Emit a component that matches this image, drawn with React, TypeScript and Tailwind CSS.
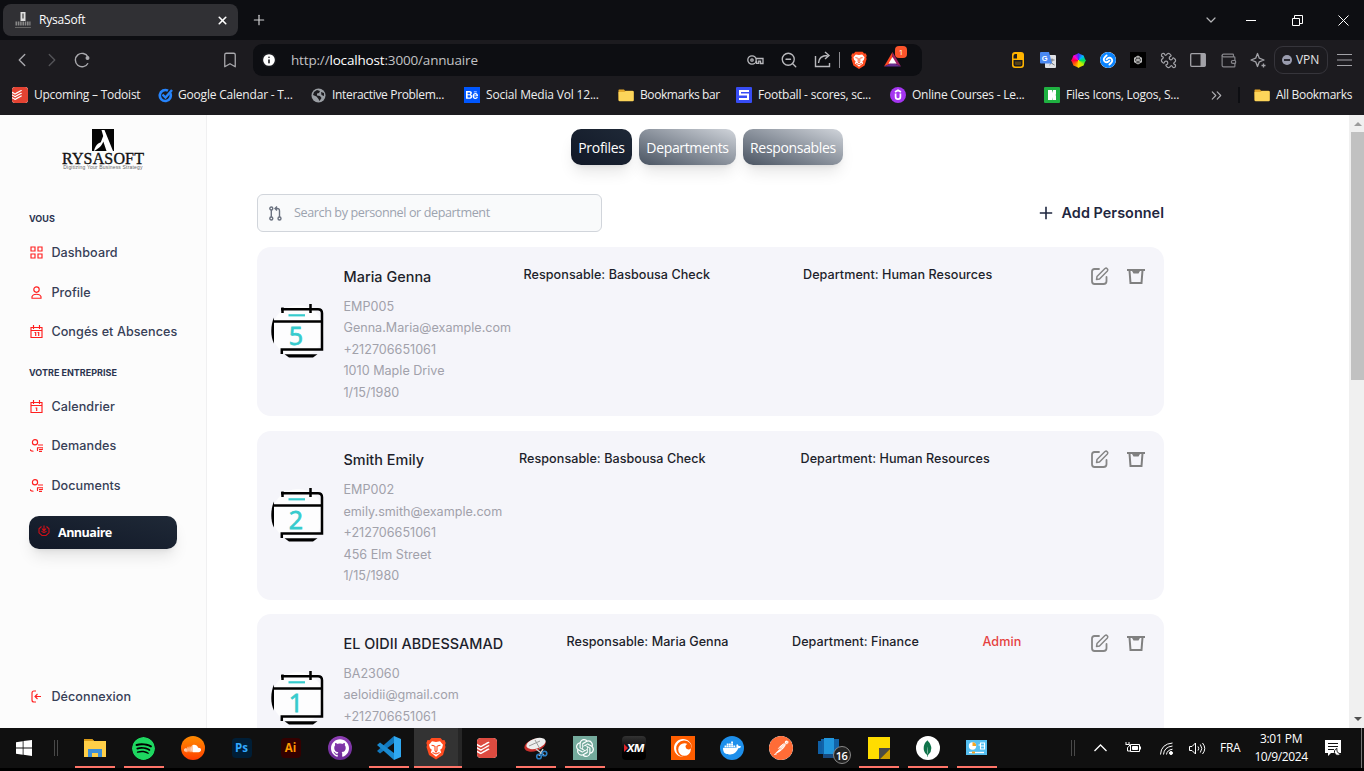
import React from "react";
import {
  Bookmark, ChevronDown, ChevronLeft, ChevronRight, ChevronsRight, Plus, X,
  Puzzle, Wallet, ZoomOut, Info,
} from "lucide-react";
import {
  SiSpotify, SiSoundcloud, SiGithub, SiDocker, SiPostman, SiCrunchyroll, SiMongodb, SiOpenai, SiTodoist, SiShazam, SiBehance,
} from "react-icons/si";

const ui = "font-['Open_Sans','Noto_Sans',sans-serif]";

function Slot({ w, children }: { w: string; children?: React.ReactNode }) {
  return <div className={`flex shrink-0 items-center justify-center ${w}`}>{children}</div>;
}

function Folder() {
  return (
    <svg width="16" height="16" viewBox="0 0 16 16">
      <path d="M1 2.5h5l1 1.2h7.5a1 1 0 0 1 1 1V13a1 1 0 0 1-1 1h-13a1 1 0 0 1-1-1V3z" fill="#e5a92b" />
      <path d="M.5 5h6l1.2-1h7a1 1 0 0 1 1 1v8.2a1 1 0 0 1-1 1h-13a1 1 0 0 1-1-1z" fill="#fdd55a" />
    </svg>
  );
}

function BraveLion({ size }: { size: number }) {
  return (
    <svg width={size} height={size * 1.15} viewBox="0 0 20 23">
      <path d="M5.500 1h9L16.500 3.200l2-.2 1.200 3-.7 2 .5 2-2.500 8L10 22.500 3 18 .5 10 1 8 .3 6l1.200-3 2 .2z" fill="#ff4b1f" />
      <path d="M6 4.300l4 .6 4-.6 3 3.400-1 3.600-1.800 1.500 1 2.700-1.700 1.200-3.500 3-3.500-3-1.700-1.200 1-2.700L4 11.300 3 7.700z" fill="#fff" />
      <path d="M5.500 8.300l3 .6M14.500 8.300l-3 .6M9 9v4.500L10 15l1-1.500V9M6.500 15.500L10 17l3.500-1.500" stroke="#ff4b1f" strokeWidth="1.100" fill="none" />
    </svg>
  );
}

function TabStrip() {
  return (
    <div className="flex h-10 shrink-0 items-center bg-[#0d0e12] pl-[3px] text-white">
      <div className="flex h-8 w-[235px] items-center rounded-lg bg-[#303034] pl-3">
        <svg width="16" height="17" viewBox="0 0 16 17">
          <rect x="5.5" y="0" width="5" height="9" fill="#ddd" />
          <path d="M8 1.500v5" stroke="#555" strokeWidth="1.4" />
          <path d="M.5 11.500h15" stroke="#888" strokeWidth="4" strokeDasharray="1.6 .7" />
          <path d="M0 15.500h16" stroke="#666" strokeWidth="1" />
        </svg>
        <span className="ml-2 text-[12px] tracking-[-0.2px]">RysaSoft</span>
        <X className="mr-[9px] ml-auto" size={13} strokeWidth={3} />
      </div>
      <Plus className="ml-[13px] text-[#d0d0d2]" size={16} strokeWidth={1.8} />
      <div className="ml-auto flex items-center">
        <Slot w="w-[30px]"><ChevronDown size={16} strokeWidth={1.8} className="text-[#b5b5b8]" /></Slot>
        <Slot w="w-[50px]"><span className="h-px w-[10px] bg-white" /></Slot>
        <Slot w="w-[42px]">
          <svg width="11" height="11" viewBox="0 0 11 11" fill="none" stroke="#fff"><path d="M.5 3.500h7v7h-7zM2.500 3.500v-3h8v8h-3" /></svg>
        </Slot>
        <Slot w="w-[50px]">
          <svg width="11" height="11" viewBox="0 0 11 11" stroke="#fff"><path d="M.5.5l10 10M10.500.5l-10 10" /></svg>
        </Slot>
        <span className="-mr-1" />
      </div>
    </div>
  );
}

function AddressBar() {
  return (
    <div className="flex h-8 w-[669px] shrink-0 items-center rounded-[9px] bg-[#0d0e12]">
      <Slot w="w-8"><Info size={16} fill="#fff" stroke="#17181c" strokeWidth={2.4} /></Slot>
      <span className="ml-[6px] text-[13.5px] tracking-[-0.17px] text-[#c2c2c5]">
        http://<span className="text-white">localhost</span>:3000/annuaire
      </span>
      <div className="ml-auto flex items-center text-[#b9b9bd]">
        <Slot w="w-[34px]">
          <svg width="17" height="12" viewBox="0 0 17 12" fill="none" stroke="currentColor" strokeWidth="1.3">
            <circle cx="5" cy="6" r="4.2" /><circle cx="5" cy="6" r="1.2" />
            <path d="M9 4.500h7v5h-2.500V7.200h-1.800v2.100H9.600V7.500H9" />
          </svg>
        </Slot>
        <Slot w="w-[34px]"><ZoomOut size={18} strokeWidth={1.8} /></Slot>
        <Slot w="w-[34px]">
          <svg width="18" height="17" viewBox="0 0 18 17" fill="none" stroke="currentColor" strokeWidth="1.4">
            <path d="M1.500 5v10.500h14V12M4.500 12c.3-4.800 3-7.500 9-7.500M11 1l4 3.500-4 3.500" />
          </svg>
        </Slot>
        <span className="-ml-[1px] h-4 w-px bg-[#8b8b90]" />
        <Slot w="w-[38px]"><BraveLion size={16} /></Slot>
        <div className="relative flex w-[29px] items-center justify-center">
          <svg width="19" height="17" viewBox="0 0 19 17">
            <path d="M9.500 1L1 15.500l8.500-4z" fill="#ff4724" /><path d="M9.500 1L18 15.500l-8.500-4z" fill="#9e1f63" />
            <path d="M1 15.500h17l-8.500-4z" fill="#662d91" /><path d="M9.500 6l-4 6.500h8z" fill="#fff" />
          </svg>
          <span className="absolute -top-[5px] right-0 flex h-3 w-3 items-center justify-center rounded-[4px] bg-[#fb542b] text-[8px] leading-none text-white">1</span>
        </div>
        <span className="w-[15px]" />
      </div>
    </div>
  );
}

function Extensions() {
  return (
    <div className="flex items-center text-[#a2a2a7]">
      <Slot w="w-[30px]">
        <svg width="12" height="16" viewBox="0 0 12 16"><rect width="12" height="16" rx="3" fill="#ffb400" /><path d="M1.500 6.500V4a2 2 0 0 1 2-2H5v4.500zM1.500 8h9v4.500a2 2 0 0 1-2 2h-5a2 2 0 0 1-2-2z" fill="#1c1b1f" /><path d="M3 9.500h6v2.500a1 1 0 0 1-1 1H4a1 1 0 0 1-1-1z" fill="#ffb400" opacity=".25" /></svg>
      </Slot>
      <Slot w="w-[30px]">
        <svg width="16" height="16" viewBox="0 0 16 16">
          <rect x="5" y="3" width="11" height="13" rx="1" fill="#dfe1e5" /><path d="M9.500 8h5M12 6.500V8c0 2-1 4-2.500 5M10.500 9c.6 2 2 3 4 4" stroke="#70757a" fill="none" />
          <path d="M1 0h8l3 11.500H1a1 1 0 0 1-1-1V1a1 1 0 0 1 1-1z" fill="#4a88f0" />
          <text x="1.800" y="8.600" fontSize="7.500" fontWeight="700" fill="#fff" fontFamily="Liberation Sans, sans-serif">G</text>
        </svg>
      </Slot>
      <Slot w="w-[30px]"><span className="h-[15px] w-[15px] rotate-180 bg-[conic-gradient(#ffd400,#ff6a00,#ff003c,#ff00d4,#4b2cff,#00b7ff,#00e05a,#b8f000,#ffd400)] [clip-path:polygon(50%_0,60%_7%,84%_16%,93%_40%,100%_50%,93%_60%,84%_84%,60%_93%,50%_100%,40%_93%,16%_84%,7%_60%,0_50%,7%_40%,16%_16%,40%_7%)]" /></Slot>
      <Slot w="w-[30px]"><SiShazam size={16} className="rounded-full bg-white text-[#0a84ff]" /></Slot>
      <Slot w="w-[30px]">
        <svg width="16" height="16" viewBox="0 0 16 16"><rect width="16" height="16" fill="#000" /><path d="M8 4l3.500 2v4L8 12l-3.500-2V6zM8 8V4M8 8l3.500 2M8 8l-3.500 2M4.500 6L8 8l3.500-2" stroke="#bbb" fill="#555" /></svg>
      </Slot>
      <Slot w="w-[30px]"><Puzzle size={17} strokeWidth={1.7} className="-scale-x-100" /></Slot>
      <Slot w="w-[30px]">
        <svg width="16" height="14" viewBox="0 0 16 14"><rect x=".7" y=".7" width="14.600" height="12.600" rx="1" fill="none" stroke="currentColor" strokeWidth="1.300" /><path d="M10.500 1h4.800v12h-4.800z" fill="currentColor" /></svg>
      </Slot>
      <Slot w="w-[30px]"><Wallet size={17} strokeWidth={1.7} className="text-[#85858a]" /></Slot>
      <Slot w="w-[30px]">
        <svg width="17" height="17" viewBox="0 0 17 17" fill="none" stroke="currentColor" strokeWidth="1.300" strokeLinejoin="round">
          <path d="M7.500 1.500l1.800 4.700 4.700 1.800-4.700 1.800-1.800 4.700-1.800-4.700L1 8l4.700-1.800zM13.500 11.500v4M11.500 13.500h4" />
        </svg>
      </Slot>
      <div className="ml-[1px] flex h-7 w-[54px] items-center rounded-[9px] border border-[#36353b] pl-[7px]">
        <span className="flex h-[10px] w-[10px] items-center justify-center rounded-full bg-[#9a9cae]"><span className="h-[1.5px] w-[6px] bg-[#2a2a33]" /></span>
        <span className="ml-[4px] text-[12px] tracking-[-0.1px] text-[#e4e4e6]">VPN</span>
      </div>
      <Slot w="w-[33px]">
        <svg width="15" height="12" viewBox="0 0 15 12" stroke="currentColor"><path d="M0 .5h15M0 6h15M0 11.500h15" strokeWidth="1.200" /></svg>
      </Slot>
      <span className="w-[3px]" />
    </div>
  );
}

function Mark({ w, icon, label, t = "tracking-[-0.24px]" }: { w: string; icon: React.ReactNode; label: string; t?: string }) {
  return (
    <div className={`flex shrink-0 items-center gap-[6px] ${w}`}>
      <span className="flex h-4 w-4 shrink-0 items-center justify-center">{icon}</span>
      <span className={`text-[12px] whitespace-nowrap ${t}`}>{label}</span>
    </div>
  );
}

function Browser() {
  return (
    <div className="flex h-[75px] shrink-0 flex-col bg-[#1c1b1f] text-[#eee]">
      <div className="flex h-10 items-center">
        <div className="flex w-[253px] items-center pl-[7px] text-[#a9a9ad]">
          <Slot w="w-[30px]"><ChevronLeft size={22} strokeWidth={1.5} /></Slot>
          <Slot w="w-[30px]"><ChevronRight size={22} strokeWidth={1.5} className="text-[#545458]" /></Slot>
          <Slot w="w-[30px]">
            <svg width="16" height="16" viewBox="0 0 16 16" fill="none" stroke="currentColor" strokeWidth="1.400"><path d="M14 11.200A6.700 6.700 0 1 1 14 5" /><circle cx="13.500" cy="6" r="1.300" fill="currentColor" /></svg>
          </Slot>
          <Bookmark className="mr-[14px] ml-auto" size={18} strokeWidth={1.7} />
        </div>
        <AddressBar />
        <div className="ml-auto"><Extensions /></div>
      </div>
      <div className="flex h-[30px] items-center pl-3">
        <Mark w="w-[145px]" label="Upcoming – Todoist" icon={<SiTodoist size={16} className="rounded-[3px] bg-white text-[#e44332]" />} />
        <Mark w="w-[153px]" t="tracking-[-0.2px] -ml-px" label="Google Calendar - T..." icon={
          <svg width="15" height="15" viewBox="0 0 15 15" fill="none"><path d="M12.200 5A5.500 5.500 0 1 1 10 2.700" stroke="#2684fc" strokeWidth="2.600" /><path d="M4.500 6.500l3 3L14 2" stroke="#2684fc" strokeWidth="2.400" /></svg>} />
        <Mark w="w-[154px]" t="tracking-[-0.33px]" label="Interactive Problem..." icon={
          <svg width="15" height="15" viewBox="0 0 15 15"><circle cx="7.500" cy="7.500" r="7" fill="#9a9ea3" /><path d="M3 4l3-2 3 1-1 2-2 .5v2l3 .5 1.500 2L8.500 13l-1-2-2-2.500L2 7zM10 4l3 1v3l-2.500-1z" fill="#1c1b1f" /></svg>} />
        <Mark w="w-[154px]" t="tracking-[-0.18px]" label="Social Media Vol 12..." icon={<span className="flex h-4 w-4 items-center justify-center bg-[#0057ff]"><SiBehance size={12} color="#fff" /></span>} />
        <Mark w="w-[118px]" t="tracking-[-0.42px]" label="Bookmarks bar" icon={<Folder />} />
        <Mark w="w-[154px]" t="tracking-[-0.22px]" label="Football - scores, sc..." icon={
          <svg width="16" height="16" viewBox="0 0 16 16"><rect width="16" height="16" rx="1" fill="#374df5" /><path d="M13 4H4v3.500h8V12H3" stroke="#fff" strokeWidth="2" fill="none" /></svg>} />
        <Mark w="w-[154px]" label="Online Courses - Le..." icon={
          <svg width="16" height="16" viewBox="0 0 16 16" fill="none" stroke="#fff" strokeWidth="1.700"><circle cx="8" cy="8" r="8" fill="#a435f0" stroke="none" /><path d="M5.600 6.500v3.200a2.400 2.400 0 0 0 4.800 0V6.500M5 5l3-1.800L11 5" /></svg>} />
        <Mark w="w-[154px]" t="tracking-[-0.23px]" label="Files Icons, Logos, S..." icon={
          <svg width="16" height="16" viewBox="0 0 16 16"><rect width="16" height="16" rx="1" fill="#1fb141" /><path d="M4 3h4v3L9 3h3v4.500l-.7.500.7.500V13H8.500L8 10v3H4z" fill="#fff" /></svg>} />
        <Slot w="w-[36px]"><ChevronsRight size={17} strokeWidth={1.6} className="text-[#b0b0b4]" /></Slot>
        <span className="mr-[14px] ml-[4px] h-4 w-[2px] bg-[#0d0e12]" />
        <Mark w="w-[110px]" t="tracking-[-0.3px]" label="All Bookmarks" icon={<Folder />} />
      </div>
    </div>
  );
}

const R = { width: 13, height: 13, viewBox: "0 0 13 13", fill: "none", stroke: "#ff1f1f", strokeWidth: 1.15 } as const;
const icons = {
  grid: <svg {...R}><path d="M1 1h4v4H1zM8 1h4v4H8zM1 8h4v4H1zM8 8h4v4H8z" /></svg>,
  user: <svg {...R}><circle cx="6.500" cy="3.600" r="2.700" /><path d="M2 12.200v-1.500C2.500 9 4 8.200 6.500 8.200S10.500 9 11 10.700v1.500z" /></svg>,
  cal: <svg {...R}><path d="M1 2.500h11v10H1zM1 5.500h11M3.500 0v4M9.500 0v4M4.500 7.500h1.200V11M7.500 7.500h1.200V11" /></svg>,
  cal1: <svg {...R}><path d="M1 2.500h11v10H1zM1 5.500h11M3.500 0v4M9.500 0v4M5.500 8H6.700v3" /></svg>,
  hand: <svg {...R}><circle cx="5" cy="3.200" r="2.600" /><path d="M8 6h5M0 10.200q0 2 3.500 2M7 8.700h6M7.500 8.700V12M9 12.300h3M9 10.500h3l1-.5" /></svg>,
};

function NavItem({ icon, label }: { icon: React.ReactNode; label: string }) {
  return (
    <div className="flex h-[39.5px] shrink-0 items-center gap-[8.4px] pl-[30px] text-[12.6px] font-medium tracking-[0.07px] text-[#374057]">
      {icon}<span className="pt-[1.5px] whitespace-nowrap">{label}</span>
    </div>
  );
}

function Sidebar() {
  return (
    <aside className="flex w-[207px] shrink-0 flex-col border-r border-[#f0f0f1] bg-[#fcfcfc] shadow-[1px_0_2px_rgba(0,0,0,0.03)]">
      <div className="flex h-[94px] shrink-0 flex-col items-center pt-[14px]">
        <svg className="shrink-0" width="22" height="22" viewBox="0 0 22 22">
          <path d="M0 0h22v22H0z" fill="#050505" />
          <path d="M9.500 1h3L21 22h-6.500l-3.200-9.500C10 17 6 20 2 22c1-5 4-8 6.800-8.800L11.200 7z" fill="#fff" />
        </svg>
        <span className="mt-[1px] font-['Liberation_Serif',serif] text-[16px] leading-[13px] tracking-[0.15px] text-[#111] [-webkit-text-stroke:0.35px_#111]">RYSASOFT</span>
        <span className="font-['Liberation_Sans',sans-serif] text-[5px] leading-[5px] tracking-[0.18px] whitespace-nowrap text-[#666]">Digitizing Your Business Strategy</span>
      </div>
      <div className="flex h-[19px] shrink-0 items-center pl-[29px] text-[9px] font-bold text-[#2b3450]">VOUS</div>
      <div className="mt-[5px] flex flex-col">
        <NavItem icon={icons.grid} label="Dashboard" />
        <NavItem icon={icons.user} label="Profile" />
        <NavItem icon={icons.cal} label="Congés et Absences" />
      </div>
      <div className="flex h-[35px] shrink-0 items-center pt-[7px] pl-[29px] text-[9px] font-bold text-[#2b3450]">VOTRE ENTREPRISE</div>
      <NavItem icon={icons.cal1} label="Calendrier" />
      <NavItem icon={icons.hand} label="Demandes" />
      <NavItem icon={icons.hand} label="Documents" />
      <div className="mt-[11px] ml-[29px] flex h-[33px] w-[148px] shrink-0 items-center rounded-[10px] bg-linear-to-tr from-[#111827] to-[#1f2937] pl-[9px] text-white shadow-lg">
        <svg className="mb-1" width="12" height="12" viewBox="0 0 12 12" fill="none" stroke="#d10f18" strokeWidth="1.100"><path d="M3.500 1.500L1 3.800v4L4 10.500h4l3-2.700v-4L8.500 1.500M6 .5v5M4 3.500l2 2.500 2-2.500M3.500 6q2.500 3 5 0" /></svg>
        <span className={`ml-2 pt-[2px] text-[12.6px] font-bold tracking-[-0.55px] ${ui}`}>Annuaire</span>
      </div>
      <div className="mt-auto mb-[12px] flex h-[39.5px] items-center gap-[8.4px] pl-[30px] text-[12.6px] font-medium tracking-[0.07px] text-[#374057]">
        <svg {...R} className="mt-px shrink-0"><path d="M6 1H4a2 2 0 0 0-2 2v7a2 2 0 0 0 2 2h2M11 6.500H5M7.500 4L5 6.500 7.500 9" /></svg>
        <span className="pt-[1.5px]">Déconnexion</span>
      </div>
    </aside>
  );
}

function Avatar({ n }: { n: string }) {
  return (
    <svg className="mt-[56px] ml-[13px] shrink-0" width="56" height="56" viewBox="0 0 56 56" fill="none" stroke="#000" strokeWidth="2.500">
      <circle cx="28" cy="28" r="26" fill="#fff" stroke="none" opacity=".75" />
      <path d="M4 14.500v26C.4 34 .4 22 4 14.500z" fill="#000" stroke="none" />
      <path d="M11 6.200h37q4 0 4 4V46.500H11.800V51M12.500 4.500v5.500M40.500 1v9M3 18.500h49" />
      <path d="M14.500 51.300h33L43 54.500H19z" fill="#000" stroke="none" />
      <path d="M18.500 12.300h16.500" stroke="#36cbcd" strokeWidth="2.200" />
      <text x="26" y="42.300" textAnchor="middle" fontSize="25" fill="#36cbcd" stroke="#36cbcd" strokeWidth=".8" fontFamily="Open Sans, sans-serif">{n}</text>
    </svg>
  );
}

type Person = { n: string; name: string; lines: string[]; resp: string; dept: string; rx: string; dx: string; admin?: boolean };
const people: Person[] = [
  { n: "5", name: "Maria Genna", lines: ["EMP005", "Genna.Maria@example.com", "+212706651061", "1010 Maple Drive", "1/15/1980"], resp: "Basbousa Check", dept: "Human Resources", rx: "w-[180px]", dx: "w-[279.5px]" },
  { n: "2", name: "Smith Emily", lines: ["EMP002", "emily.smith@example.com", "+212706651061", "456 Elm Street", "1/15/1980"], resp: "Basbousa Check", dept: "Human Resources", rx: "w-[175.5px]", dx: "w-[281.5px]" },
  { n: "1", name: "EL OIDII ABDESSAMAD", lines: ["BA23060", "aeloidii@gmail.com", "+212706651061"], resp: "Maria Genna", dept: "Finance", rx: "w-[223px]", dx: "w-[225.5px]", admin: true },
];

function Card({ p }: { p: Person }) {
  return (
    <article className="flex h-[169px] w-[907px] shrink-0 rounded-[14px] bg-[#f5f5fa]">
      <Avatar n={p.n} />
      <div className="ml-[17.5px] flex min-w-0 grow flex-col">
        <div className="flex pt-[17px] text-[12.6px] leading-[21px] font-[530] tracking-[0.04px] whitespace-nowrap text-[#1d1f2b]">
          <span className={`pt-[1.5px] text-[14.4px] ${p.rx}`}>{p.name}</span>
          <span className={p.dx}>Responsable: {p.resp}</span>
          <span className="w-[190.5px]">Department: {p.dept}</span>
          {p.admin && <span className="text-[#e5413f]">Admin</span>}
        </div>
        <div className="mt-[9px] text-[12.6px] leading-[21.6px] text-[#a1a1aa]">
          {p.lines.map((l, i) => <div key={i}>{l}</div>)}
        </div>
      </div>
      <div className="mr-[19px] flex gap-[18px] pt-[19.5px]">
        <svg width="18" height="18" viewBox="0 0 18 18" fill="none" stroke="#868686" strokeWidth="1.800" strokeLinejoin="round" strokeLinecap="round">
          <path d="M8 2H3.500Q1 2 1 4.500v9.800Q1 17 3.500 17h9q3 0 3-2.700V10" />
          <path d="M6 9.500L14 1.500q1.200-.8 2.200.2t.2 2.200L8.500 12l-3 .5z" strokeWidth="1.500" />
        </svg>
        <svg width="18" height="18" viewBox="0 0 18 18" fill="none" stroke="#808080" strokeWidth="2">
          <path d="M0 3h18" strokeWidth="2" /><path d="M2.500 3.500L3.500 16h11l1-12.500" /><path d="M5 4h8l-1.500 2.500h-5z" fill="#808080" stroke="none" />
        </svg>
      </div>
    </article>
  );
}

function Main() {
  const tab = "flex h-9 items-center justify-center rounded-[10px] text-[14px] text-white shadow-lg";
  return (
    <main className="flex min-w-0 grow flex-col overflow-hidden bg-white pl-[50px]">
      <div className={`flex shrink-0 gap-[7px] pt-[14px] pl-[314px] ${ui}`}>
        <div className={`${tab} w-[61px] bg-linear-to-tr from-[#111827] to-[#1f2937] tracking-[-0.3px]`}>Profiles</div>
        <div className={`${tab} w-[97px] bg-linear-to-tr from-[#4b5563] to-[#d1d5db] tracking-[-0.35px]`}>Departments</div>
        <div className={`${tab} w-[100px] bg-linear-to-tr from-[#4b5563] to-[#d1d5db] tracking-[-0.33px]`}>Responsables</div>
      </div>
      <div className="mt-[29px] mb-[15px] flex h-[38px] w-[907px] shrink-0 items-center justify-between">
        <div className="flex h-[38px] w-[345px] items-center rounded-md border border-[#d1d5db] bg-[#f9fafb] pl-[11px]">
          <svg width="13" height="15" viewBox="0 0 13 15" fill="none" stroke="#6b7280" strokeWidth="1.400"><circle cx="2.300" cy="2.500" r="1.500" /><circle cx="2.300" cy="12.500" r="1.500" /><circle cx="10.500" cy="12.500" r="1.500" /><path d="M2.300 4v7M10.500 11V5q0-2.500-2.500-2.500H6M8 .5l-2 2 2 2" /></svg>
          <span className={`ml-[12px] pt-px text-[12.6px] tracking-[-0.4px] text-[#9ca3af] ${ui}`}>Search by personnel or department</span>
        </div>
        <div className="flex items-center gap-[9px] text-[14.4px] font-semibold tracking-[0.05px] text-[#1f2740]">
          <svg width="14" height="14" viewBox="0 0 14 14" stroke="currentColor" strokeWidth="1.600"><path d="M7 .8v12.400M.8 7h12.400" /></svg>
          <span>Add Personnel</span>
        </div>
      </div>
      <div className="flex flex-col gap-[14.5px]">{people.map((p) => <Card key={p.n} p={p} />)}</div>
    </main>
  );
}

function Task({ children, on = true, active = false }: { children: React.ReactNode; on?: boolean; active?: boolean }) {
  return (
    <div className="flex w-[49px] shrink-0 flex-col items-center">
      <div className={`flex h-[38px] items-center justify-center pt-[2px] ${active ? "w-[48px] border-r-[4px] border-[#262626] bg-[#333]" : "w-[49px]"}`}>{children}</div>
      <div className={`h-[2px] ${active ? "w-[48px]" : "w-10"} ${on ? "bg-[#ff7468]" : ""}`} />
    </div>
  );
}

const round = "flex h-6 w-6 items-center justify-center rounded-full";

function Taskbar() {
  return (
    <footer className={`flex h-[43px] shrink-0 border-b-[3px] border-black bg-[#101010] text-white ${ui}`}>
      <div className="flex w-[70px] shrink-0 items-center pl-4">
        <svg width="16" height="16" viewBox="0 0 16 16" fill="#fff"><path d="M0 2.200l6.700-1v6.400H0zM7.500 1L16 0v7.600H7.500zM0 8.400h6.700v6.400L0 13.800zM7.500 8.400H16V16l-8.500-1.200z" /></svg>
        <span className="ml-[22px] h-4 w-[4px] border-x border-[#494949]" />
      </div>
      <Task>
        <svg width="22" height="20" viewBox="0 0 22 20"><path d="M0 1h8l2 2h12v16H0z" fill="#ffcf48" /><path d="M0 1h8l2 2H0z" fill="#d99a16" /><path d="M4 19v-8h14v8h-4v-4H8v4z" fill="#3f8fd6" /></svg>
      </Task>
      <Task><SiSpotify size={23} className="rounded-full bg-black text-[#1ed760]" /></Task>
      <Task on={false}><span className={`${round} bg-linear-to-b from-[#ff8a00] to-[#ff3a00]`}><SiSoundcloud size={17} /></span></Task>
      <Task on={false}><span className="flex h-5 w-5 items-center justify-center rounded-[4px] bg-[#001e36] text-[11.5px] font-bold text-[#31a8ff]">Ps</span></Task>
      <Task on={false}><span className="flex h-5 w-5 items-center justify-center rounded-[4px] bg-[#330000] text-[11.5px] font-bold text-[#ff9a00]">Ai</span></Task>
      <Task on={false}><span className={`${round} bg-linear-to-b from-[#8f3fb5] to-[#6b2a96]`}><SiGithub size={18} /></span></Task>
      <Task>
        <svg width="24" height="24" viewBox="0 0 24 24"><path d="M17 0v7L3 17.500 0 15z" fill="#1278bd" /><path d="M17 24v-7L3 6.500 0 9z" fill="#1a8ad0" /><path d="M17 0l7 3v18l-7 3z" fill="#2fa8f0" /></svg>
      </Task>
      <Task active><BraveLion size={20} /></Task>
      <Task on={false}><SiTodoist size={20} className="rounded-[4px] bg-white text-[#dd4b40]" /></Task>
      <Task>
        <svg width="24" height="23" viewBox="0 0 24 23"><ellipse cx="11" cy="8" rx="11" ry="6" transform="rotate(-18 11 8)" fill="#c9302c" /><ellipse cx="12" cy="6.500" rx="10" ry="5" transform="rotate(-18 12 6.500)" fill="#eee" /><path d="M5 9l11-5M11 3l5 9" stroke="#999" /><path d="M12 12l8 6M19 12l-4 7" stroke="#ccc" strokeWidth="1.500" /><circle cx="15" cy="19.500" r="2.300" fill="none" stroke="#2b7fc4" strokeWidth="1.600" /><circle cx="20.500" cy="16.500" r="2.300" fill="none" stroke="#2b7fc4" strokeWidth="1.600" /></svg>
      </Task>
      <Task><span className="flex h-6 w-6 items-center justify-center bg-[#74aa9c]"><SiOpenai size={18} /></span></Task>
      <Task on={false}>
        <span className="flex h-6 w-6 items-center justify-center rounded-[4px] bg-linear-to-b from-[#333] to-black font-['Inter',sans-serif] text-[11px] font-bold tracking-[-0.8px] italic">
          <svg className="-mr-px" width="4" height="8" viewBox="0 0 4 8"><path d="M0 0l4 4-4 4z" fill="#e2252b" /></svg>XM
        </span>
      </Task>
      <Task on={false}><span className="flex h-6 w-6 items-center justify-center bg-[#ff5e00]"><SiCrunchyroll size={18} /></span></Task>
      <Task on={false}><span className={`${round} bg-[#1d8feb]`}><SiDocker size={18} /></span></Task>
      <Task on={false}><SiPostman size={24} className="rounded-full bg-white text-[#ff6c37]" /></Task>
      <Task on={false}>
        <div className="relative">
          <svg width="24" height="22" viewBox="0 0 24 22"><path d="M3 2h18v15H3z" fill="#1263a8" /><path d="M6 1h10v16H6z" fill="#2196dc" /><path d="M0 4h4v13H0z" fill="#0f5fa5" /><path d="M5 17h12v4H5z" fill="#174a80" /></svg>
          <span className="absolute top-[9px] left-[15px] flex h-[18px] w-[18px] items-center justify-center rounded-full border border-[#888] bg-[#222] text-[11px] leading-none font-semibold tracking-[-0.5px]">16</span>
        </div>
      </Task>
      <Task><svg width="22" height="22" viewBox="0 0 22 22"><path d="M0 0h22v11.500L11.500 22H0z" fill="#fd0" /><path d="M11 11h11v1L12 22h-1z" fill="#4b4a46" /><path d="M22 12v10H12z" fill="#d0a000" /></svg></Task>
      <Task><span className={`${round} bg-white`}><SiMongodb size={17} color="#10744b" /></span></Task>
      <Task>
        <svg width="21" height="16" viewBox="0 0 21 16"><path d="M0 0h21v15H0z" fill="#55bff0" /><circle cx="6.500" cy="6" r="3.700" fill="#fff" /><path d="M6.500 6V2.300A3.700 3.700 0 0 1 10.200 6z" fill="#f5a623" /><path d="M12.500 5h2M14.500 3h4v6h-4zM14.500 6h4" stroke="#fff" fill="none" strokeWidth="1.100" /><path d="M3 12.500h15" stroke="#fff" strokeWidth="1.300" /><path d="M6 12.500h3" stroke="#f5a623" strokeWidth="2" /></svg>
      </Task>
      <div className="ml-auto flex items-center">
        <span className="h-4 w-[4px] border-x border-[#494949]" />
        <Slot w="w-[50px]"><svg width="13" height="8" viewBox="0 0 13 8" fill="none" stroke="#fff" strokeWidth="1.300"><path d="M.5 7l6-6 6 6" /></svg></Slot>
        <Slot w="w-[16px]"><svg className="shrink-0" width="16" height="12" viewBox="0 0 16 12" fill="none" stroke="#fff"><path d="M5.500 2.500h9v7h-9zM15.500 4.500v3" /><path d="M7.500 4.500h5v3h-5z" fill="#fff" /><path d="M1 0v2M4 0v2M.5 2.500h4V4L2.500 5.500V9h3" /></svg></Slot>
        <Slot w="w-[50px]">
          <svg width="13" height="13" viewBox="0 0 13 13" fill="none" stroke="#fff"><path d="M.5 12.500Q1 2 12.500 1M3.500 12.500Q4 5 12.500 4M6.500 12.500Q7 8 12.500 7.200" /><circle cx="11" cy="11" r="1.500" fill="#fff" /></svg>
        </Slot>
        <Slot w="w-[13px]">
          <svg className="shrink-0" width="17" height="13" viewBox="0 0 17 13" fill="none" stroke="#fff"><path d="M.5 4.500H3L6.500 1v11L3 8.500H.5zM9 4.500q1.500 2 0 4M11.300 2.500q3 4 0 8M13.500 1q4.500 5.500 0 11" /></svg>
        </Slot>
        <span className="ml-[16px] w-[22px] text-[12px] tracking-[-0.3px]">FRA</span>
        <div className="flex w-[78px] flex-col items-center text-[12px] leading-[18px] tracking-[-0.4px]"><span>3:01 PM</span><span>10/9/2024</span></div>
        <Slot w="w-[26px]">
          <svg width="17" height="16" viewBox="0 0 17 16"><path d="M0 0h16v13H6l-3 3v-3H0z" fill="#fff" /><path d="M3 3.500h10M3 6.500h10M3 9.500h6" stroke="#101010" strokeWidth="1.200" /><path d="M12 8.500a3.500 3.500 0 1 0 4 5c-3 .5-4.500-2-4-5z" fill="#fff" stroke="#101010" /></svg>
        </Slot>
        <span className="mr-[2px] ml-[15px] h-10 w-px bg-[#777]" />
      </div>
    </footer>
  );
}

export default function App() {
  return (
    <div className="flex h-[771px] w-[1364px] flex-col overflow-hidden font-['Inter',sans-serif]">
      <div className={`flex shrink-0 flex-col ${ui}`}>
        <TabStrip />
        <Browser />
      </div>
      <div className="flex h-[613px] shrink-0">
        <Sidebar />
        <Main />
        <div className="flex w-[15px] shrink-0 flex-col items-center bg-[#f0f0f0]">
          <svg className="mt-[7px] ml-[2px] shrink-0" width="8" height="4" viewBox="0 0 8 4"><path d="M0 4l4-4 4 4z" fill="#9c9c9c" /></svg>
          <div className="mt-[6px] ml-[2px] h-[248px] w-[13px] bg-[#c1c1c1]" />
          <svg className="mt-auto mb-[7px] ml-[2px] shrink-0" width="8" height="4" viewBox="0 0 8 4"><path d="M0 0l4 4 4-4z" fill="#505050" /></svg>
        </div>
      </div>
      <Taskbar />
    </div>
  );
}
